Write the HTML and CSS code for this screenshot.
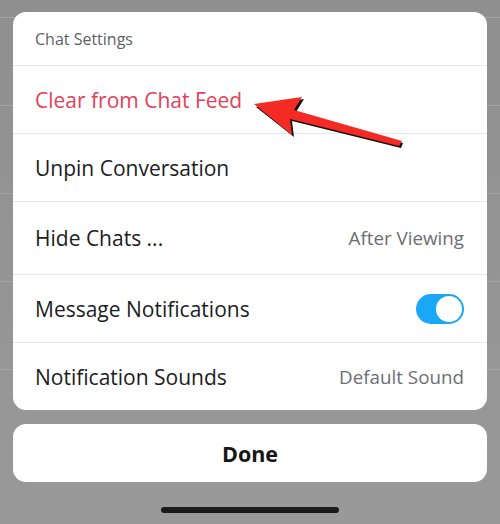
FILE: index.html
```html
<!DOCTYPE html>
<html lang="en">
<head>
    <meta charset="UTF-8">
    <meta name="viewport" content="width=device-width, initial-scale=1.0">
    <title>Chat Settings</title>
    <link rel="stylesheet" href="styles.css">
</head>
<body>
    <div class="backdrop">
        <div class="backdrop-row"></div>
        <div class="backdrop-row"></div>
        <div class="backdrop-row"></div>
        <div class="backdrop-row"></div>
        <div class="backdrop-row"></div>
    </div>

    <div class="sheet">
        <div class="card">
            <div class="card-title">Chat Settings</div>
            <div class="row danger">Clear from Chat Feed</div>
            <div class="row">Unpin Conversation</div>
            <div class="row tall">
                <span>Hide Chats ...</span>
                <span class="value">After Viewing</span>
            </div>
            <div class="row">
                <span>Message Notifications</span>
                <span class="toggle on"><span class="knob"></span></span>
            </div>
            <div class="row">
                <span>Notification Sounds</span>
                <span class="value">Default Sound</span>
            </div>
        </div>

        <button class="done">Done</button>

        <div class="home-bar"></div>
    </div>

    <!-- annotation arrow pointing at "Clear from Chat Feed" -->
    <svg class="arrow" width="500" height="524" viewBox="0 0 500 524">
        <polygon points="256,107 304,99 296,112 403,143 401,148 292,121 294,137" fill="#111"/>
        <polygon points="254,104 302,97 294,110 402,141 399,146 290,119 292,135" fill="#f42a25"/>
    </svg>
</body>
</html>
```

FILE: styles.css
```css
* { box-sizing: border-box; }
body { margin: 0; width: 500px; height: 524px; overflow: hidden; background: linear-gradient(#8f8f8f, #999999); font-family: "Open Sans", "Noto Sans", sans-serif; position: relative; }

.backdrop { position: absolute; inset: 0; padding-top: 17px; }
.backdrop-row { height: 88px; border-top: 1px solid #a3a3a3; }

.sheet { position: relative; display: flex; flex-direction: column; padding: 12px 13px 0; }
.card { background: #fff; border-radius: 13px; overflow: hidden; }
.card-title { height: 54px; padding: 0 22px; display: flex; align-items: center; font-size: 16px; color: #5f5f64; border-bottom: 1px solid #e6e6e9; }
.row { height: 68px; padding: 0 23px 0 22px; display: flex; align-items: center; justify-content: space-between; font-size: 21px; color: #1c1c1e; border-bottom: 1px solid #e6e6e9; }
.row.tall { height: 73px; }
.row:last-child { border-bottom: none; height: 67px; }
.row.danger { color: #e6405a; }
.value { font-size: 18.8px; color: #6d6e73; }

.toggle { width: 48px; height: 30px; border-radius: 15px; background: #1aa7f6; display: flex; align-items: center; justify-content: flex-end; padding: 2px; }
.knob { width: 26px; height: 26px; border-radius: 50%; background: #fff; }

.done { margin-top: 14px; height: 58px; border: none; border-radius: 13px; background: #fff; font-family: inherit; font-size: 21.5px; font-weight: 700; color: #161616; }

.home-bar { align-self: center; margin-top: 25px; width: 178px; height: 6px; border-radius: 3px; background: #1a1a1a; }

.arrow { position: absolute; left: 0; top: 0; pointer-events: none; }
```
